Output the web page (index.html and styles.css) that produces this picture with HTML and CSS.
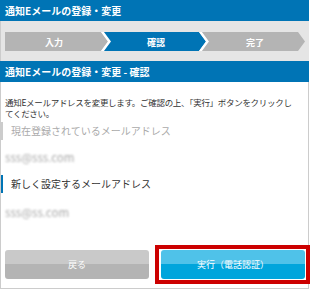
FILE: index.html
```html
<!DOCTYPE html>
<html>
<head>
    <meta charset="utf-8">
    <title>通知Eメールの登録・変更</title>
    <link rel="stylesheet" href="styles.css">
</head>
<body>
    <div class="page">
        <h1 class="bar">通知Eメールの登録・変更</h1>
        <div class="flow">
            <svg class="flow-steps" width="300" height="19" viewBox="0 0 300 19">
                <polygon class="step" points="0,0 96,0 103,9.5 96,19 0,19"/>
                <polygon class="sep" points="96,0 99,0 106,9.5 99,19 96,19 103,9.5"/>
                <polygon class="step step-on" points="99,0 194,0 201,9.5 194,19 99,19 106,9.5"/>
                <polygon class="sep" points="194,0 197,0 204,9.5 197,19 194,19 201,9.5"/>
                <polygon class="step" points="197,0 293,0 300,9.5 293,19 197,19 204,9.5"/>
                <text x="49" y="10">入力</text>
                <text x="151" y="10">確認</text>
                <text x="250" y="10">完了</text>
            </svg>
        </div>
        <h2 class="bar">通知Eメールの登録・変更 - 確認</h2>
        <div class="content">
            <p class="lead">通知Eメールアドレスを変更します。ご確認の上、「実行」ボタンをクリックし<br>てください。</p>
            <dl class="fields">
                <dt class="label label-old">現在登録されているメールアドレス</dt>
                <dd class="mail">sss@sss.com</dd>
                <dt class="label label-new">新しく設定するメールアドレス</dt>
                <dd class="mail mail-new">sss@ss.com</dd>
            </dl>
            <div class="actions">
                <a href="#" class="btn btn-back">戻る</a>
                <a href="#" class="btn btn-run">実行（電話認証）</a>
            </div>
        </div>
    </div>
</body>
</html>
```

FILE: styles.css
```css
*{
    padding: 0;
    margin: 0;
    list-style: none;
    text-decoration: none;
}

body
{
    background: #ffffff;
    font-family: "Noto Sans CJK JP", "Noto Sans", sans-serif;
    color: #333333;
}

.page
{
    width: 309px;
    height: 289px;
    display: flex;
    flex-direction: column;
}

.bar
{
    height: 21px;
    line-height: 21px;
    padding-left: 5px;
    background-color: #0074b5;
    color: #ffffff;
    font-size: 10px;
    font-weight: bold;
}

.flow
{
    height: 40px;
    padding: 11px 0 0 5px;
    box-sizing: border-box;
    background-color: #e5e5e5;
    border-left: 1px solid #cccccc;
}

.flow-steps
{
    display: block;
    margin-left: -1px;
}

.flow-steps .step
{
    fill: #b4b4b4;
}

.flow-steps .step-on
{
    fill: #0074b5;
}

.flow-steps .sep
{
    fill: #ffffff;
}

.flow-steps text
{
    fill: #ffffff;
    font-size: 9px;
    font-weight: bold;
    text-anchor: middle;
    dominant-baseline: central;
}

.content
{
    flex: 1;
    border: 1px solid #cccccc;
    border-top: none;
    padding-top: 15px;
}

.lead
{
    padding-left: 4px;
    font-size: 8.5px;
    line-height: 11px;
    letter-spacing: -0.3px;
    white-space: nowrap;
}

.fields
{
    margin-top: 3px;
}

.label
{
    height: 18px;
    line-height: 18px;
    padding-left: 8px;
    font-size: 10px;
    border-left: 2px solid #cccccc;
}

.label-old
{
    color: #aaaaaa;
}

.label-new
{
    border-left-color: #0074b5;
    color: #333333;
}

.mail
{
    height: 18px;
    line-height: 18px;
    margin: 8px 0 9px;
    padding-left: 4px;
    font-size: 11.5px;
    color: #a8a8a8;
    filter: blur(0.8px);
}

.mail-new
{
    margin-top: 10px;
}

.actions
{
    display: grid;
    grid-template-columns: 1fr 1fr;
    gap: 12px;
    margin-top: 29px;
    padding: 0 3px 0 4px;
}

.btn
{
    display: block;
    height: 29px;
    line-height: 29px;
    border-radius: 3px;
    text-align: center;
    color: #ffffff;
    font-size: 9px;
}

.btn-back
{
    background: linear-gradient(#c9c9c9 50%, #b4b4b4 50%);
}

.btn-run
{
    position: relative;
    background: linear-gradient(#4fc2e9 50%, #00a5dc 50%);
}

/* 注目枠 */
.btn-run::after
{
    content: "";
    position: absolute;
    top: -5px;
    left: -6px;
    right: -5px;
    bottom: -5px;
    border: 4px solid #cc0000;
}
```
